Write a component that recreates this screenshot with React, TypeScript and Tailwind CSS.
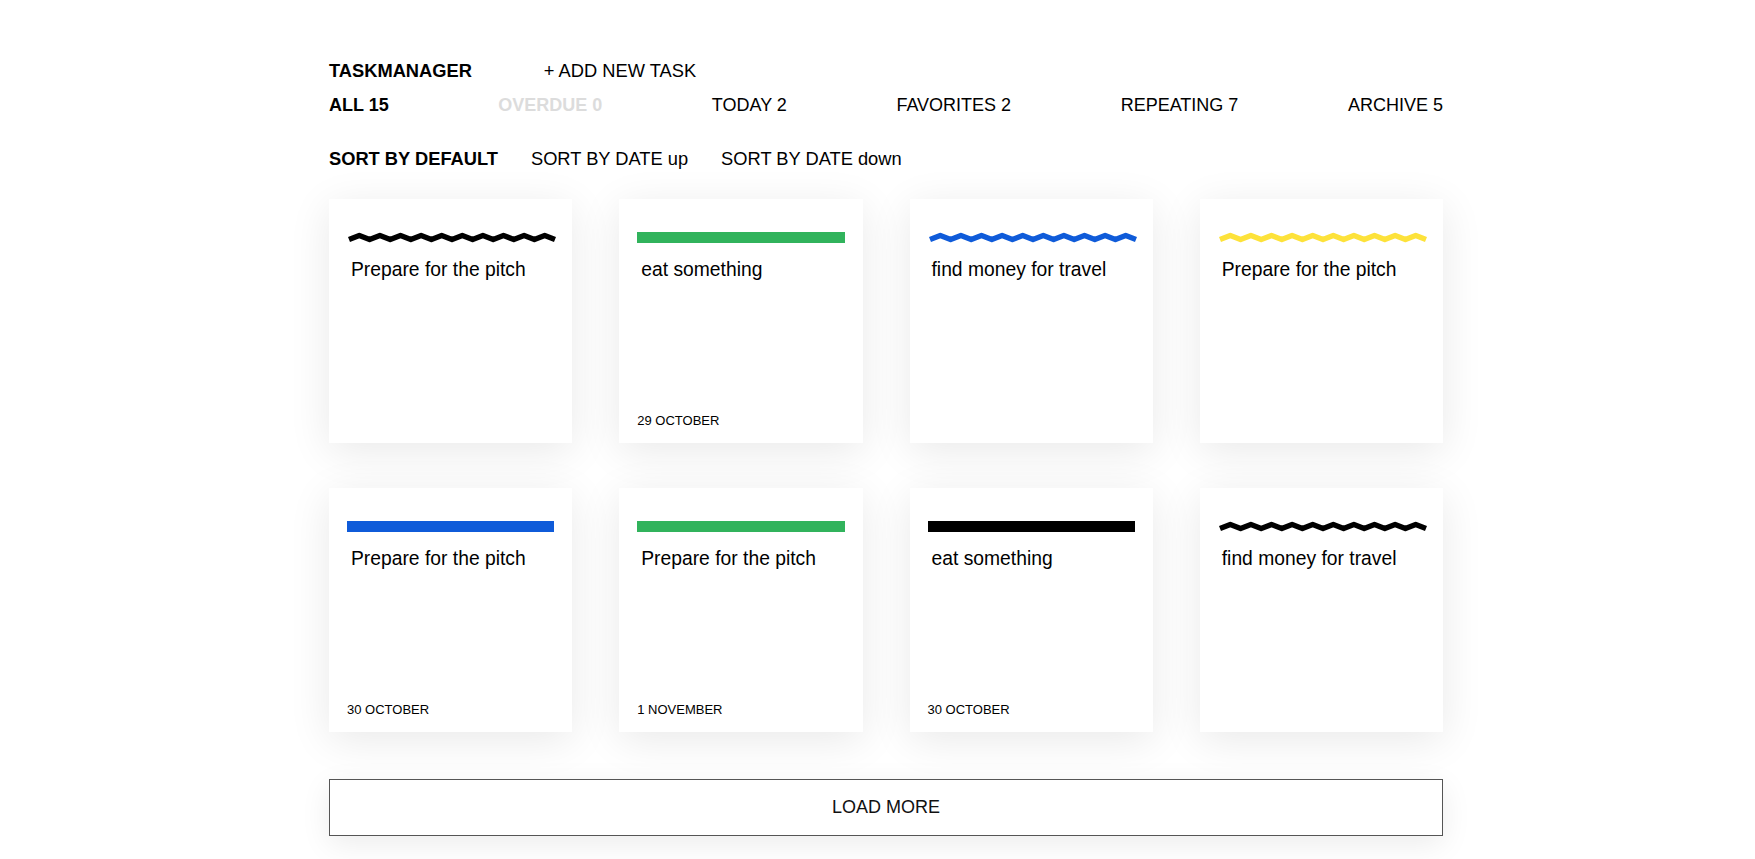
import React from "react";

type Card = {
  text: string;
  color: string;
  wavy: boolean;
  date?: string;
};

const cards: Card[] = [
  { text: "Prepare for the pitch", color: "#000000", wavy: true },
  { text: "eat something", color: "#31b35c", wavy: false, date: "29 OCTOBER" },
  { text: "find money for travel", color: "#0f5bd9", wavy: true },
  { text: "Prepare for the pitch", color: "#fde23a", wavy: true },
  { text: "Prepare for the pitch", color: "#0f5bd9", wavy: false, date: "30 OCTOBER" },
  { text: "Prepare for the pitch", color: "#31b35c", wavy: false, date: "1 NOVEMBER" },
  { text: "eat something", color: "#000000", wavy: false, date: "30 OCTOBER" },
  { text: "find money for travel", color: "#000000", wavy: true },
];

function Wave({ color }: { color: string }) {
  const pts: string[] = [];
  const period = 20.6;
  const n = 10;
  for (let i = 0; i <= n * 2; i++) {
    const x = 2 + (i * period) / 2;
    const y = i % 2 === 0 ? 7.5 : 3.5;
    pts.push(`${x.toFixed(2)},${y}`);
  }
  return (
    <svg width="210" height="11" viewBox="0 0 210 11" className="block">
      <polyline
        points={pts.join(" ")}
        fill="none"
        stroke={color}
        strokeWidth="5.5"
        strokeLinejoin="round"
        strokeLinecap="butt"
      />
    </svg>
  );
}

function TaskCard({ card }: { card: Card }) {
  return (
    <div className="h-[244px] bg-white shadow-[0_8px_40px_rgba(0,0,0,0.09)] px-[18px] pt-[33px] pb-[14px] flex flex-col">
      {card.wavy ? (
        <Wave color={card.color} />
      ) : (
        <div className="h-[11px] w-full" style={{ backgroundColor: card.color }} />
      )}
      <p className="mt-[15px] pl-[4px] text-[19.3px] leading-[24px] text-black">
        {card.text}
      </p>
      <div className="flex-1" />
      {card.date && (
        <p className="text-[13px] leading-[16px] text-black">{card.date}</p>
      )}
    </div>
  );
}

export default function App() {
  return (
    <div
      className="min-h-screen bg-white text-black"
      style={{ fontFamily: '"Liberation Sans", Arial, Helvetica, sans-serif' }}
    >
      <div className="pl-[329px] pt-[59px]">
        <div className="w-[1114px]">
          <header className="flex items-center gap-[72px] text-[18.3px] leading-[24px]">
            <h1 className="font-bold">TASKMANAGER</h1>
            <span>+ ADD NEW TASK</span>
          </header>
          <nav className="mt-[10px] flex justify-between text-[18px] leading-[24px] font-bold">
            <span>ALL 15</span>
            <span className="text-[#dcdcdc]">OVERDUE 0</span>
            <span className="font-normal">TODAY 2</span>
            <span className="font-normal">FAVORITES 2</span>
            <span className="font-normal">REPEATING 7</span>
            <span className="font-normal">ARCHIVE 5</span>
          </nav>
          <div className="mt-[30px] flex gap-[33px] text-[18.3px] leading-[24px]">
            <span className="font-bold">SORT BY DEFAULT</span>
            <span>SORT BY DATE up</span>
            <span>SORT BY DATE down</span>
          </div>
          <div className="mt-[28px] grid grid-cols-4 gap-x-[47px] gap-y-[45px]">
            {cards.map((c, i) => (
              <TaskCard key={i} card={c} />
            ))}
          </div>
          <button className="mt-[47px] w-full h-[57px] border border-[#555] bg-white shadow-[0_8px_30px_rgba(0,0,0,0.08)] text-[18px] text-[#111]">
            LOAD MORE
          </button>
        </div>
      </div>
    </div>
  );
}
